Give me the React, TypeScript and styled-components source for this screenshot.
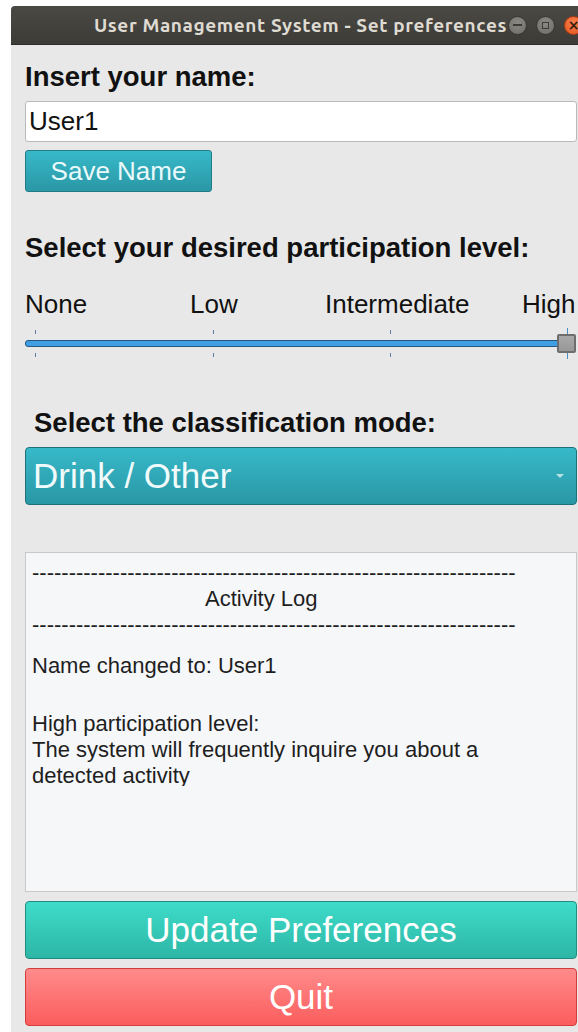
import * as React from 'react';
import styled, { createGlobalStyle } from 'styled-components';

const levels = ['None', 'Low', 'Intermediate', 'High'];
const tickOffsets = [10, 188, 365, 542];
const dashes = '-'.repeat(66);

export default function App() {
  return (
    <>
      <GlobalStyle />
      <Screen>
        <Window>
          <TitleBar>
            <TitleText>User Management System - Set preferences</TitleText>
            <WindowButtons>
              <RoundButton>
                <MinimizeGlyph />
              </RoundButton>
              <RoundButton>
                <MaximizeGlyph />
              </RoundButton>
              <RoundButton $close>
                <CloseGlyph>×</CloseGlyph>
              </RoundButton>
            </WindowButtons>
          </TitleBar>

          <Body>
            <Heading $top={16}>Insert your name:</Heading>
            <NameInput defaultValue="User1" />
            <SaveButton>Save Name</SaveButton>

            <Heading $top={40}>Select your desired participation level:</Heading>
            <LevelLabels>
              {levels.map((l) => (
                <LevelLabel key={l}>{l}</LevelLabel>
              ))}
            </LevelLabels>
            <Slider>
              {tickOffsets.map((x) => (
                <React.Fragment key={x}>
                  <Tick $top={2} style={{ left: x }} />
                  <Tick $top={25} style={{ left: x }} />
                </React.Fragment>
              ))}
              <Groove />
              <Handle />
              <Tick $top={0} $long style={{ left: 542 }} />
              <Tick $top={25} $long style={{ left: 542 }} />
            </Slider>

            <Heading $top={48} $indent={9}>
              Select the classification mode:
            </Heading>
            <ModeSelect>
              <span>Drink / Other</span>
              <DropArrow />
            </ModeSelect>

            <LogBox>
              <LogViewport>
                <LogLine>{dashes}</LogLine>
                <LogLine $indent={173}>Activity Log</LogLine>
                <LogLine>{dashes}</LogLine>
                <LogLine $gap={15}>Name changed to: User1</LogLine>
                <LogLine $gap={32}>High participation level:</LogLine>
                <LogLine>The system will frequently inquire you about a</LogLine>
                <LogLine>detected activity</LogLine>
              </LogViewport>
            </LogBox>

            <BigButton $variant="update">Update Preferences</BigButton>
            <BigButton $variant="quit">Quit</BigButton>
          </Body>
        </Window>
      </Screen>
    </>
  );
}

const GlobalStyle = createGlobalStyle`
  html, body {
    margin: 0;
    padding: 0;
    background: #ffffff;
  }
  body {
    font-family: 'Liberation Sans', Arial, sans-serif;
  }
`;

const Screen = styled.div`
  width: 578px;
  height: 1032px;
  padding: 6px 0 0 11px;
  box-sizing: border-box;
  overflow: hidden;
`;

const Window = styled.div`
  width: 580px;
  height: 1026px;
  display: flex;
  flex-direction: column;
  background: #e8e8e8;
  border-top-left-radius: 4px;
  overflow: hidden;
`;

const TitleBar = styled.div`
  height: 39px;
  flex-shrink: 0;
  display: flex;
  align-items: center;
  justify-content: flex-end;
  background: linear-gradient(#4a4944, #3c3b37);
  border-bottom: 1px solid #2e2d2a;
  box-sizing: border-box;
`;

const TitleText = styled.div`
  font-family: 'Ubuntu', 'DejaVu Sans', sans-serif;
  font-weight: bold;
  font-size: 19px;
  letter-spacing: 0.6px;
  color: #dfdbd2;
  white-space: nowrap;
  margin-right: 1px;
`;

const WindowButtons = styled.div`
  display: flex;
  align-items: center;
  gap: 9px;
  margin-right: 8px;
`;

const RoundButton = styled.div<{ $close?: boolean }>`
  width: 19px;
  height: 19px;
  flex-shrink: 0;
  border-radius: 50%;
  display: flex;
  align-items: center;
  justify-content: center;
  background: ${({ $close }) =>
    $close
      ? 'radial-gradient(circle at 50% 35%, #f7834f, #e2521d)'
      : 'radial-gradient(circle at 50% 35%, #8a8984, #6d6c67)'};
  border: 1px solid ${({ $close }) => ($close ? '#b43c12' : '#3a3935')};
  box-sizing: border-box;
`;

const MinimizeGlyph = styled.div`
  width: 9px;
  height: 2px;
  background: #3c3b37;
`;

const MaximizeGlyph = styled.div`
  width: 7px;
  height: 7px;
  border: 1.5px solid #3c3b37;
  box-sizing: border-box;
`;

const CloseGlyph = styled.span`
  font-family: 'DejaVu Sans', sans-serif;
  font-size: 14px;
  font-weight: bold;
  line-height: 1;
  color: #3c2010;
`;

const Body = styled.div`
  display: flex;
  flex-direction: column;
  padding: 0 0 0 14px;
  width: 552px;
`;

const Heading = styled.div<{ $top: number; $indent?: number }>`
  margin-top: ${({ $top }) => $top}px;
  padding-left: ${({ $indent }) => $indent ?? 0}px;
  font-size: 27.5px;
  line-height: 32px;
  font-weight: bold;
  color: #111111;
  white-space: nowrap;
`;

const NameInput = styled.input`
  margin-top: 8px;
  height: 41px;
  box-sizing: border-box;
  width: 100%;
  border: 1px solid #b9b9b9;
  border-radius: 3px;
  background: #ffffff;
  padding: 0 3px;
  font-family: 'Liberation Sans', Arial, sans-serif;
  font-size: 26px;
  color: #111111;
  outline: none;
`;

const SaveButton = styled.button`
  margin-top: 8px;
  width: 187px;
  height: 42px;
  box-sizing: border-box;
  border: 1px solid #217c88;
  border-radius: 3px;
  background: linear-gradient(#37b9c9, #2a97a5);
  color: #eaf9fb;
  font-family: 'Liberation Sans', Arial, sans-serif;
  font-size: 26px;
  padding: 0;
`;

const LevelLabels = styled.div`
  margin-top: 25px;
  display: grid;
  grid-template-columns: 165px 135px 197px auto;
  font-size: 26px;
  line-height: 30px;
  color: #111111;
`;

const LevelLabel = styled.div`
  white-space: nowrap;
`;

const Slider = styled.div`
  position: relative;
  margin-top: 9px;
  height: 31px;
`;

const Groove = styled.div`
  margin-top: 12px;
  margin-right: 12px;
  height: 7px;
  box-sizing: border-box;
  border: 1px solid #245a82;
  border-radius: 3px;
  background: #3f9fe2;
`;

const Handle = styled.div`
  position: absolute;
  left: 532px;
  top: 6px;
  width: 19px;
  height: 19px;
  box-sizing: border-box;
  border: 2px solid #6e6e6e;
  border-radius: 2px;
  background: linear-gradient(#a8a8a8, #989898);
`;

const Tick = styled.div<{ $top: number; $long?: boolean }>`
  position: absolute;
  top: ${({ $top }) => $top}px;
  width: 1px;
  height: ${({ $long }) => ($long ? 6 : 4)}px;
  background: ${({ $long }) => ($long ? '#4a8fc4' : '#5b7f9c')};
`;

const ModeSelect = styled.div`
  margin-top: 8px;
  height: 58px;
  box-sizing: border-box;
  display: flex;
  align-items: center;
  justify-content: space-between;
  padding: 0 12px 0 7px;
  border: 1px solid #20707b;
  border-radius: 4px;
  background: linear-gradient(#37b9c9, #2a97a5);
  color: #f2fbfc;
  font-size: 35px;
`;

const DropArrow = styled.div`
  width: 0;
  height: 0;
  border-left: 4px solid transparent;
  border-right: 4px solid transparent;
  border-top: 4px solid rgba(230, 245, 248, 0.75);
`;

const LogBox = styled.div`
  margin-top: 47px;
  height: 340px;
  box-sizing: border-box;
  border: 1px solid #c9c9c9;
  background: #f6f7f9;
  padding: 7px 6px 0 6px;
`;

const LogViewport = styled.div`
  height: 226px;
  overflow: hidden;
`;

const LogLine = styled.div<{ $indent?: number; $gap?: number }>`
  font-size: 22px;
  line-height: 26px;
  color: #1e1e1e;
  white-space: nowrap;
  padding-left: ${({ $indent }) => $indent ?? 0}px;
  margin-top: ${({ $gap }) => $gap ?? 0}px;
`;

const BigButton = styled.button<{ $variant: 'update' | 'quit' }>`
  margin-top: 9px;
  height: 58px;
  width: 100%;
  box-sizing: border-box;
  border-radius: 4px;
  border: 1px solid ${({ $variant }) => ($variant === 'update' ? '#238c80' : '#d43b3b')};
  background: ${({ $variant }) =>
    $variant === 'update'
      ? 'linear-gradient(#3edcc9, #2db6a6)'
      : 'linear-gradient(#ff8b8b, #fb5d5d)'};
  color: #ffffff;
  font-family: 'Liberation Sans', Arial, sans-serif;
  font-size: 35px;
  padding: 0;
`;
